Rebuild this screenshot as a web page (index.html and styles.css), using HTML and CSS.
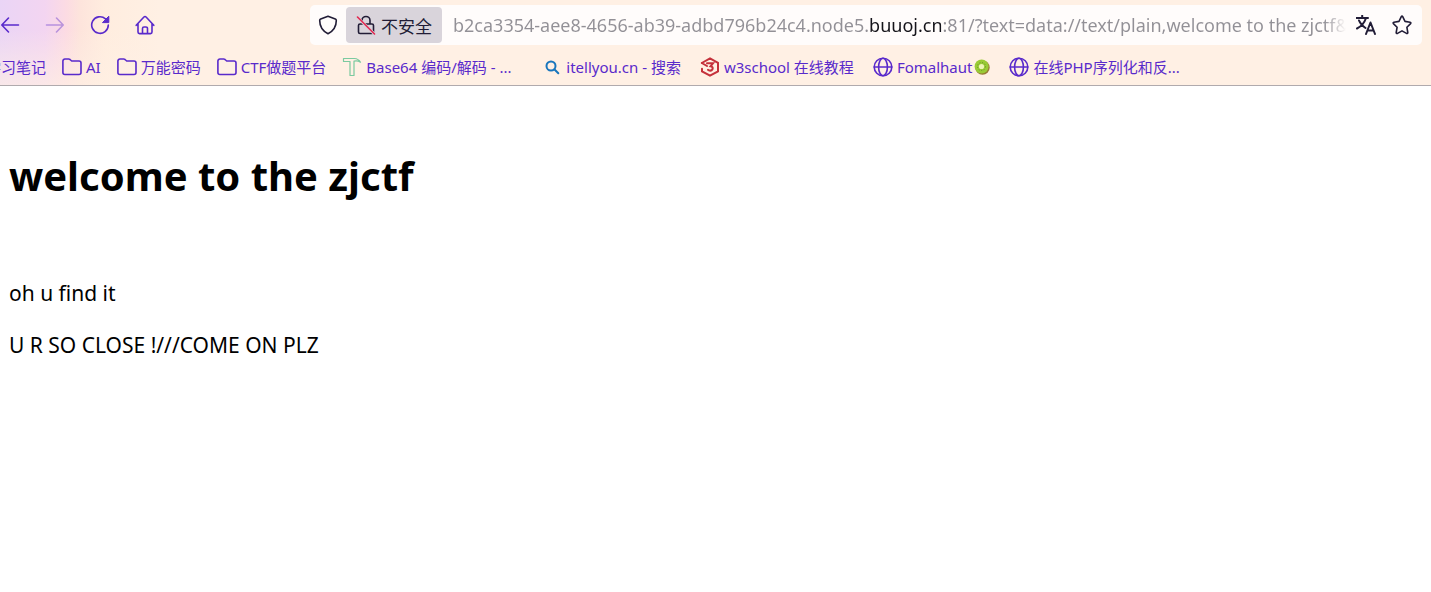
FILE: index.html
```html
<!DOCTYPE html>
<html lang="zh-CN">
<head>
<meta charset="utf-8">
<title>welcome to the zjctf</title>
<link rel="stylesheet" href="styles.css">
</head>
<body>
<svg class="defs" aria-hidden="true">
  <symbol id="folder" viewBox="0 0 20 20"><path d="M.9 15.500V4a2 2 0 0 1 2-2h3.800c.5 0 .9.2 1.300.500l1.700 1.500h7.300a2 2 0 0 1 2 2v9.500a2 2 0 0 1-2 2H2.900a2 2 0 0 1-2-2z"/></symbol>
  <symbol id="globe" viewBox="0 0 20 20"><circle cx="10" cy="10" r="8.800"/><ellipse cx="10" cy="10" rx="4.400" ry="8.800"/><path d="M1.200 10h17.600"/></symbol>
</svg>
<header class="chrome">
  <div class="toolbar">
    <div class="nav-buttons">
      <button class="icon-button" aria-label="后退"><svg class="icon" viewBox="0 0 20 20"><path d="M18.500 10H2M8.500 3 1.800 10l6.700 7"/></svg></button>
      <button class="icon-button" aria-label="前进" disabled><svg class="icon" viewBox="0 0 20 20"><path d="M1.500 10H18M11.500 3l6.700 7-6.700 7"/></svg></button>
      <button class="icon-button" aria-label="刷新"><svg class="icon" viewBox="0 0 20 20"><path d="M18.300 10A8.300 8.300 0 1 1 15.500 3.800"/><path class="solid" d="M18.800 1.600v6h-6z"/></svg></button>
      <button class="icon-button" aria-label="主页"><svg class="icon" viewBox="0 0 20 20"><path d="M1.200 10.300 8.700 2.200q1.300-1.300 2.600 0l7.500 8.100M3 8.800v8.300a1.500 1.500 0 0 0 1.500 1.500h11a1.500 1.500 0 0 0 1.500-1.500V8.800M7.500 18.500v-5a1.500 1.500 0 0 1 1.500-1.500h2a1.500 1.500 0 0 1 1.500 1.500v5"/></svg></button>
    </div>
    <div class="address-bar">
      <button class="field-button" aria-label="跟踪保护"><svg class="icon" viewBox="0 0 20 20"><path d="M10 1.200 17.300 4q1 .4 1 1.500c0 6.500-2.900 10.500-8.300 13.300C4.600 16 1.700 12 1.700 5.500q0-1.100 1-1.500z"/></svg></button>
      <button class="security"><svg class="icon" viewBox="0 0 20 20"><path d="M6 9V5.500a4 4 0 0 1 8 0V9M4 9h12a1.500 1.500 0 0 1 1.500 1.500v6.500a1.500 1.500 0 0 1-1.500 1.500H4a1.500 1.500 0 0 1-1.500-1.500v-6.500A1.500 1.500 0 0 1 4 9z"/><path class="slash-gap" d="M2 3 19 19.500"/><path class="slash" d="M1.500 2 18.500 19"/></svg>不安全</button>
      <input class="url" type="text" aria-label="地址" spellcheck="false" value="b2ca3354-aee8-4656-ab39-adbd796b24c4.node5.buuoj.cn:81/?text=data://text/plain,welcome to the zjctf&amp;file=useless.php">
      <button class="field-button" aria-label="翻译"><svg class="icon translate" viewBox="0 0 20 20"><path d="M.5 3h11.500M6.200.5V3M9.800 3.500C8.500 7.500 5 11.500 1 13.500M3 5.500c1.200 3 3.500 5.500 6.500 7.500M10 19l4.500-11.500L19 19M11.500 15.500h6"/></svg></button>
      <button class="field-button star" aria-label="添加书签"><svg class="icon" viewBox="0 0 20 20"><path d="M9.300 1.700q.7-1.200 1.400 0l2.300 4.700 5.100.8q1.300.4.500 1.400l-3.700 3.700.9 5.200q0 1.400-1.300.9L10 15.900l-4.500 2.500q-1.300.5-1.300-.9l.9-5.200L1.400 8.600q-.8-1 .5-1.400l5.100-.8z"/></svg></button>
    </div>
  </div>
  <nav class="bookmarks" aria-label="书签">
    <a class="bookmark" href="#">学习笔记</a>
    <a class="bookmark" href="#"><svg class="icon"><use href="#folder"/></svg>AI</a>
    <a class="bookmark" href="#"><svg class="icon"><use href="#folder"/></svg>万能密码</a>
    <a class="bookmark" href="#"><svg class="icon"><use href="#folder"/></svg>CTF做题平台</a>
    <a class="bookmark site wide" href="#"><svg class="icon hammer" viewBox="0 0 20 20"><path d="M1.500 4.500V1.500h11q4 .3 6 3.700-3-1.800-6.500-1v14.300H8V4.500z"/></svg>Base64 编码/解码 - ...</a>
    <a class="bookmark site" href="#"><svg class="icon search" viewBox="0 0 20 20"><circle cx="9" cy="9" r="4.500"/><path d="m12.300 12.300 4 4"/></svg>itellyou.cn - 搜索</a>
    <a class="bookmark site" href="#"><svg class="icon w3" viewBox="0 0 20 20"><path d="M1.800 6 10 1.400l8 4.500v8.400l-8 4.400-8-4.400v-2.500M1.800 6l5.200 3M7 6.300h6l-2.500 3q3 .6 2 3-1.300 2.300-4.500.500"/></svg>w3school 在线教程</a>
    <a class="bookmark site" href="#"><svg class="icon"><use href="#globe"/></svg><span class="with-kiwi">Fomalhaut<svg class="kiwi" viewBox="0 0 16 16" aria-hidden="true"><circle cx="8.500" cy="8.600" r="7.200" fill="#987b35"/><circle cx="7.600" cy="7.500" r="7" fill="#9acb35"/><circle cx="7.500" cy="7.500" r="4" fill="none" stroke="#628b28" stroke-width="1" stroke-dasharray="1 1.700"/><circle cx="7.500" cy="7.500" r="2.600" fill="#edf4b5"/></svg></span></a>
    <a class="bookmark site" href="#"><svg class="icon"><use href="#globe"/></svg>在线PHP序列化和反...</a>
  </nav>
</header>
<main class="page">
  <h1>welcome to the zjctf</h1>
  <p>oh u find it</p>
  <p>U R SO CLOSE !///COME ON PLZ</p>
</main>
</body>
</html>
```

FILE: styles.css
```css
* { box-sizing: border-box; }
body {
  margin: 0;
  background: #fff;
  color: #000;
  font-family: "Noto Sans", "Noto Sans CJK SC", sans-serif;
}
.defs { display: none; }
button, input {
  margin: 0;
  padding: 0;
  border: 0;
  background: none;
  font: inherit;
  color: inherit;
}
.chrome {
  overflow: hidden;
  border-bottom: 1px solid #b0aaad;
  color: #592acb;
  background:
    linear-gradient(180deg, transparent 35%, #fff0e4b0),
    linear-gradient(90deg, #ead5f6, #f3d5f1 45px, #fcdbe3 66px, #fde4dc 80px, #ffeddf 105px, #fff0e4 160px);
}
.icon {
  display: block;
  flex: none;
  width: 20px;
  height: 20px;
  fill: none;
  stroke: currentColor;
  stroke-width: 1.6;
  stroke-linecap: round;
  stroke-linejoin: round;
}
.icon .solid { fill: currentColor; stroke-width: 1; }
.toolbar {
  display: flex;
  align-items: center;
  padding: 5px 9px 5px 0;
}
.nav-buttons {
  display: flex;
  flex: none;
  gap: 25px;
  width: 310px;
}
.icon-button:disabled { opacity: .4; }
.address-bar {
  display: flex;
  flex: 1;
  align-items: center;
  min-width: 0;
  height: 40px;
  border-radius: 5px;
  background: #fffcfb;
  color: #211c36;
}
.field-button {
  display: grid;
  flex: none;
  place-items: center;
  width: 36px;
  height: 36px;
}
.star { margin-right: 2px; }
.security {
  display: flex;
  flex: none;
  align-items: center;
  gap: 5px;
  height: 36px;
  padding: 0 10px;
  border-radius: 4px;
  background: #d9d4db;
  font-size: 17px;
}
.slash-gap { stroke: #d9d4db; stroke-width: 3; }
.slash { stroke: #e22850; }
.url {
  flex: 1;
  min-width: 0;
  height: 36px;
  margin-left: 11px;
  font-size: 18px;
  color: transparent;
  background: linear-gradient(90deg, #929096 415px, #15141a 415px 488px, #929096 488px calc(100% - 24px), transparent calc(100% - 2px));
  -webkit-background-clip: text;
  background-clip: text;
}
.translate { stroke-width: 2; }
.bookmarks {
  display: flex;
  gap: 16px;
  height: 35px;
  margin-left: -14px;
  padding-bottom: 2px;
  font-size: 15px;
  white-space: nowrap;
}
.bookmark {
  display: flex;
  flex: none;
  align-items: center;
  gap: 4px;
  color: inherit;
  text-decoration: none;
}
.site { padding-right: 3px; }
.wide { min-width: 184px; }
.hammer { stroke: #7bcaa0; stroke-width: 1.2; }
.search { stroke: #1976bd; stroke-width: 2; }
.w3 { stroke: #c5313b; stroke-width: 2; stroke-linejoin: miter; }
.with-kiwi { display: flex; align-items: center; gap: 2px; }
.kiwi { width: 16px; height: 16px; }
.page { padding: 60px 9px; }
h1 { margin: 0 0 72px; font-size: 40px; line-height: 60px; }
p { margin: 0 0 22px; font-size: 21px; line-height: 30px; }
```
